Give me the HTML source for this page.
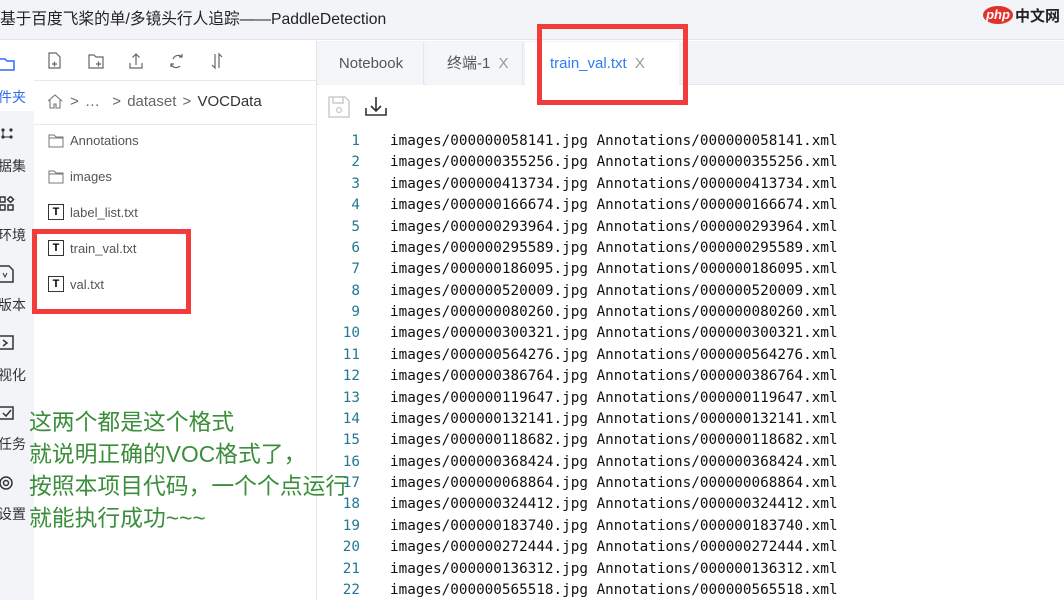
<!DOCTYPE html>
<html><head><meta charset="utf-8"><style>
*{margin:0;padding:0;box-sizing:border-box}
body{width:1064px;height:600px;overflow:hidden;background:#fff;font-family:"Liberation Sans","Noto Sans CJK SC",sans-serif;position:relative}
.abs{position:absolute}
.title{left:0;top:0;width:1064px;height:40px;background:#f3f4f8;border-bottom:1px solid #e2e4ea;font-size:15.7px;color:#222;line-height:40px;padding-left:0}
.side{left:0;top:41px;width:34px;height:559px;background:#f3f4f8;overflow:hidden}
.side .t{position:absolute;right:8px;font-size:14px;color:#333;white-space:nowrap}
.panel{left:34px;top:41px;width:283px;height:559px;background:#fff;border-right:1px solid #e4e6eb}
.row{position:absolute;left:14px;font-size:13px;color:#555}
.code{font-family:"DejaVu Sans Mono",monospace;font-size:14.3px;color:#111}
.ln{position:absolute;width:60px;text-align:right;left:300px;color:#237893}
.tx{position:absolute;left:390px}
.green{left:29px;font-size:22.8px;color:#3b8e3b;line-height:32px;white-space:nowrap}
.red{border:5px solid #f23b3b}
</style></head><body>
<div class="abs title">基于百度飞桨的单/多镜头行人追踪——PaddleDetection</div>
<div class="abs" style="left:983px;top:6px;width:30px;height:18px;border-radius:50%;background:#e0312b;color:#fff;font-size:13px;font-style:italic;font-weight:bold;text-align:center;line-height:18px">php</div>
<div class="abs" style="left:1015px;top:5px;font-size:15px;font-weight:bold;color:#222">中文网</div>

<div class="abs side">
<div style="position:absolute;left:0;top:0;width:34px;height:70px;background:#fff"></div>
<svg class="abs" style="left:0;top:15px" width="16" height="16"><path d="M-2 3h7l2 2h7v9h-16z" fill="none" stroke="#2f6cf6" stroke-width="1.5"/></svg>
<div class="t" style="top:46px;color:#2f6cf6">文件夹</div>
<svg class="abs" style="left:0;top:86px" width="16" height="16"><circle cx="3" cy="3" r="1.6" fill="#333"/><circle cx="11" cy="3" r="1.6" fill="#333"/><circle cx="11" cy="10" r="1.6" fill="#333"/><circle cx="3" cy="10" r="1.6" fill="#333"/><path d="M3 3v7h8" stroke="#333" fill="none"/></svg>
<div class="t" style="top:115px">数据集</div>
<svg class="abs" style="left:0;top:155px" width="16" height="16"><rect x="0" y="1" width="5" height="5" fill="none" stroke="#333" stroke-width="1.5"/><rect x="0" y="9" width="5" height="5" fill="none" stroke="#333" stroke-width="1.5"/><rect x="8" y="9" width="5" height="5" fill="none" stroke="#333" stroke-width="1.5"/><path d="M10.5 0.5l3 3-3 3-3-3z" fill="none" stroke="#333" stroke-width="1.5"/></svg>
<div class="t" style="top:184px">环境</div>
<svg class="abs" style="left:0;top:224px" width="16" height="18"><path d="M0 1h9l4 4v12h-13" fill="none" stroke="#333" stroke-width="1.5"/><path d="M3 8l2 4 2-4" fill="none" stroke="#333"/></svg>
<div class="t" style="top:254px">版本</div>
<svg class="abs" style="left:0;top:294px" width="16" height="16"><rect x="-1" y="1" width="14" height="13" fill="none" stroke="#333" stroke-width="1.5"/><path d="M3 5l4 3-4 3" fill="none" stroke="#333" stroke-width="1.5"/></svg>
<div class="t" style="top:324px">可视化</div>
<svg class="abs" style="left:0;top:364px" width="16" height="16"><rect x="-1" y="2" width="14" height="12" fill="none" stroke="#333" stroke-width="1.5"/><path d="M3 8l3 3 5-6" fill="none" stroke="#333" stroke-width="1.5"/></svg>
<div class="t" style="top:393px">任务</div>
<svg class="abs" style="left:0;top:434px" width="16" height="16"><circle cx="6" cy="8" r="6" fill="none" stroke="#333" stroke-width="1.5"/><circle cx="6" cy="8" r="2.5" fill="none" stroke="#333" stroke-width="1.5"/></svg>
<div class="t" style="top:463px">设置</div>
</div>

<div class="abs panel">
<div style="position:absolute;left:0;top:0;width:282px;height:40px;border-bottom:1px solid #e8e9ee"></div>
<svg class="abs" style="left:14px;top:11px" width="190" height="18" fill="none" stroke="#666" stroke-width="1.2">
<path d="M1 1h7l4 4v11h-11z M4 12h5M6.5 9.5v5"/>
<path d="M41 3h5l2 2h7v11h-14z M48 12h5M50.5 9.5v5"/>
<path d="M82 11v5h12v-5M88 13v-11M84.5 5.5l3.5-3.5 3.5 3.5"/>
<path d="M134 5a5.5 5.5 0 0 0-9 2M123 12a5.5 5.5 0 0 0 9 2M134 2v3h-3M123 15v-3h3"/>
<path d="M167 2v14l-3-3M171 16v-14l3 3"/>
</svg>
<div style="position:absolute;left:0;top:40px;width:282px;height:44px;border-bottom:1px solid #e8e9ee"></div>
<svg class="abs" style="left:13px;top:52px" width="16" height="16" fill="none" stroke="#777" stroke-width="1.1"><path d="M1 8l7-6 7 6M3 7v8h4v-4h2v4h4v-8"/></svg>
<div class="row" style="top:52px;left:36px;font-size:15px;color:#666;word-spacing:2px">&gt; … &nbsp;&gt; dataset &gt; <span style="color:#333">VOCData</span></div>
<svg class="abs" style="left:14px;top:92px" width="16" height="16" fill="none" stroke="#777"><path d="M1 2h5l2 2h7v10h-14z M1 5h14"/></svg>
<div class="row" style="left:36px;top:92px">Annotations</div>
<svg class="abs" style="left:14px;top:128px" width="16" height="16" fill="none" stroke="#777"><path d="M1 2h5l2 2h7v10h-14z M1 5h14"/></svg>
<div class="row" style="left:36px;top:128px">images</div>
<div class="abs" style="left:14px;top:163px;width:16px;height:16px;border:1px solid #333;font-size:11px;font-weight:bold;text-align:center;line-height:14px">T</div>
<div class="row" style="left:36px;top:164px">label_list.txt</div>
<div class="abs" style="left:14px;top:199px;width:16px;height:16px;border:1px solid #333;font-size:11px;font-weight:bold;text-align:center;line-height:14px">T</div>
<div class="row" style="left:36px;top:200px">train_val.txt</div>
<div class="abs" style="left:14px;top:235px;width:16px;height:16px;border:1px solid #333;font-size:11px;font-weight:bold;text-align:center;line-height:14px">T</div>
<div class="row" style="left:36px;top:236px">val.txt</div>
</div>

<div class="abs" style="left:317px;top:41px;width:747px;height:44px;background:#f3f4f8;border-bottom:1px solid #e6e7ec"></div>
<div class="abs" style="left:319px;top:42px;width:105px;height:43px;background:#f5f6f9;border-right:1px solid #e6e7ec;font-size:15px;color:#555;line-height:43px;text-align:center">Notebook</div>
<div class="abs" style="left:427px;top:42px;width:96px;height:43px;background:#f5f6f9;border-right:1px solid #e6e7ec;font-size:15px;color:#555;line-height:43px;padding-left:20px">终端-1 <span style="color:#999;margin-left:4px">X</span></div>
<div class="abs" style="left:525px;top:42px;width:154px;height:44px;background:#fff;font-size:15px;color:#2f7cf6;line-height:43px;padding-left:25px">train_val.txt <span style="color:#999;margin-left:4px">X</span></div>

<svg class="abs" style="left:328px;top:96px" width="60" height="22" fill="none"><path d="M1 1h16l4 4v16h-20z M5 1v6h10v-6" stroke="#ccc" stroke-width="1.5"/><circle cx="11" cy="14" r="2.5" stroke="#ccc" stroke-width="1.3"/><path d="M38 12v7h20v-7M48 1v14M43 10l5 5 5-5" stroke="#333" stroke-width="1.6"/></svg>

<div class="code" style="position:absolute;left:0;top:2px;width:1064px">
<div class="ln" style="top:131px">1</div><div class="tx" style="top:131px">images/000000058141.jpg Annotations/000000058141.xml</div>
<div class="ln" style="top:152px">2</div><div class="tx" style="top:152px">images/000000355256.jpg Annotations/000000355256.xml</div>
<div class="ln" style="top:174px">3</div><div class="tx" style="top:174px">images/000000413734.jpg Annotations/000000413734.xml</div>
<div class="ln" style="top:195px">4</div><div class="tx" style="top:195px">images/000000166674.jpg Annotations/000000166674.xml</div>
<div class="ln" style="top:217px">5</div><div class="tx" style="top:217px">images/000000293964.jpg Annotations/000000293964.xml</div>
<div class="ln" style="top:238px">6</div><div class="tx" style="top:238px">images/000000295589.jpg Annotations/000000295589.xml</div>
<div class="ln" style="top:259px">7</div><div class="tx" style="top:259px">images/000000186095.jpg Annotations/000000186095.xml</div>
<div class="ln" style="top:281px">8</div><div class="tx" style="top:281px">images/000000520009.jpg Annotations/000000520009.xml</div>
<div class="ln" style="top:302px">9</div><div class="tx" style="top:302px">images/000000080260.jpg Annotations/000000080260.xml</div>
<div class="ln" style="top:323px">10</div><div class="tx" style="top:323px">images/000000300321.jpg Annotations/000000300321.xml</div>
<div class="ln" style="top:345px">11</div><div class="tx" style="top:345px">images/000000564276.jpg Annotations/000000564276.xml</div>
<div class="ln" style="top:366px">12</div><div class="tx" style="top:366px">images/000000386764.jpg Annotations/000000386764.xml</div>
<div class="ln" style="top:388px">13</div><div class="tx" style="top:388px">images/000000119647.jpg Annotations/000000119647.xml</div>
<div class="ln" style="top:409px">14</div><div class="tx" style="top:409px">images/000000132141.jpg Annotations/000000132141.xml</div>
<div class="ln" style="top:430px">15</div><div class="tx" style="top:430px">images/000000118682.jpg Annotations/000000118682.xml</div>
<div class="ln" style="top:452px">16</div><div class="tx" style="top:452px">images/000000368424.jpg Annotations/000000368424.xml</div>
<div class="ln" style="top:473px">17</div><div class="tx" style="top:473px">images/000000068864.jpg Annotations/000000068864.xml</div>
<div class="ln" style="top:494px">18</div><div class="tx" style="top:494px">images/000000324412.jpg Annotations/000000324412.xml</div>
<div class="ln" style="top:516px">19</div><div class="tx" style="top:516px">images/000000183740.jpg Annotations/000000183740.xml</div>
<div class="ln" style="top:537px">20</div><div class="tx" style="top:537px">images/000000272444.jpg Annotations/000000272444.xml</div>
<div class="ln" style="top:559px">21</div><div class="tx" style="top:559px">images/000000136312.jpg Annotations/000000136312.xml</div>
<div class="ln" style="top:580px">22</div><div class="tx" style="top:580px">images/000000565518.jpg Annotations/000000565518.xml</div>
</div>

<div class="abs green" style="top:406px">这两个都是这个格式<br>就说明正确的VOC格式了，<br>按照本项目代码，一个个点运行<br>就能执行成功~~~</div>

<div class="abs red" style="left:32px;top:229px;width:159px;height:85px"></div>
<div class="abs red" style="left:537px;top:24px;width:151px;height:81px"></div>
</body></html>
